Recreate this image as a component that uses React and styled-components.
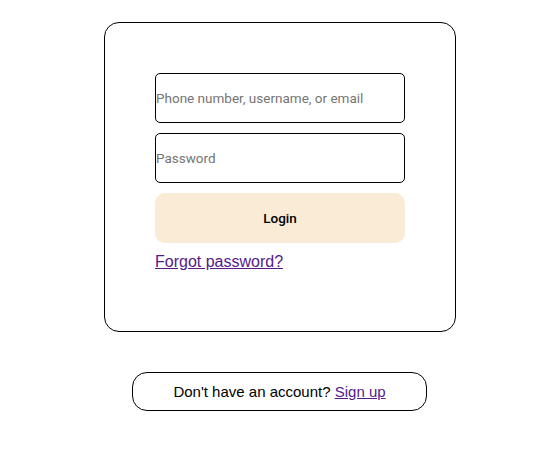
import React from "react";
import styled, { createGlobalStyle } from "styled-components";

const GlobalStyle = createGlobalStyle`
  body {
    margin: 8px;
    font-family: "Liberation Sans", Arial, sans-serif;
    background: #fff;
    overflow: hidden;
  }
`;

const Page = styled.div`
  display: flex;
  flex-direction: column;
  align-items: center;
  padding: 14px 0 0 14px;
  gap: 40px;
`;

const Card = styled.form`
  width: 250px;
  padding: 50px 50px 60px;
  border: 1px solid #000;
  border-radius: 15px;
  display: flex;
  flex-direction: column;
  gap: 10px;
`;

const Input = styled.input`
  box-sizing: border-box;
  width: 250px;
  height: 50px;
  padding: 0;
  border: 1px solid #000;
  border-radius: 5px;
  font-family: Roboto, sans-serif;
  font-size: 13.5px;
  outline: none;
  &::placeholder {
    color: #757575;
  }
`;

const LoginButton = styled.button`
  width: 250px;
  height: 50px;
  border: none;
  border-radius: 10px;
  background: #faebd7;
  font-family: Roboto, sans-serif;
  font-size: 13.5px;
  font-weight: 500;
  color: #000;
`;

const Link = styled.a`
  color: #551a8b;
  text-decoration: underline;
`;

const ForgotLink = styled(Link)`
  align-self: flex-start;
  font-size: 16px;
  line-height: 18px;
`;

const SignupBox = styled.div`
  width: 293px;
  height: 37px;
  margin-right: 1px;
  border: 1px solid #000;
  border-radius: 15px;
  text-align: center;
  line-height: 37px;
  font-size: 15px;
  color: #000;
`;

export default function App() {
  return (
    <>
      <GlobalStyle />
      <Page>
        <Card onSubmit={(e) => e.preventDefault()}>
          <Input type="text" placeholder="Phone number, username, or email" />
          <Input type="password" placeholder="Password" />
          <LoginButton type="submit">Login</LoginButton>
          <ForgotLink href="#">Forgot password?</ForgotLink>
        </Card>
        <SignupBox>
          Don't have an account? <Link href="#">Sign up</Link>
        </SignupBox>
      </Page>
    </>
  );
}
